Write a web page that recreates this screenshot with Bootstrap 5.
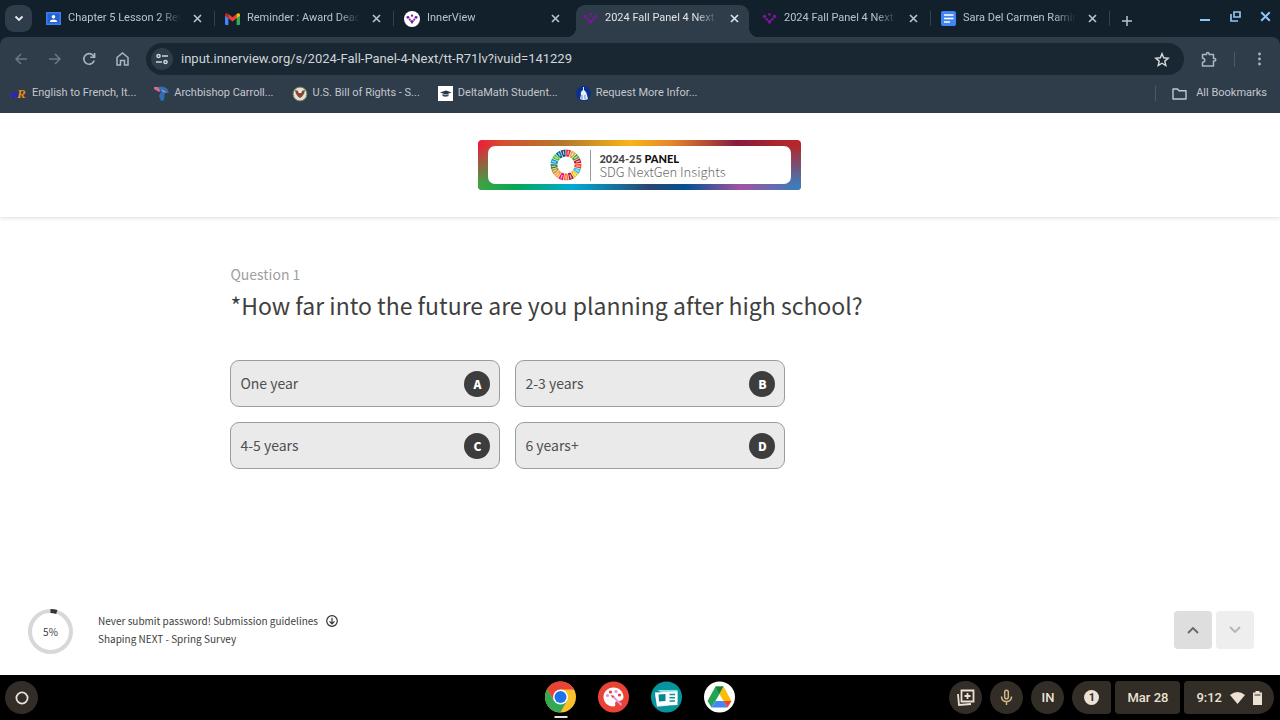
<!DOCTYPE html>
<html lang="en">
<head>
<meta charset="utf-8">
<meta name="viewport" content="width=device-width, initial-scale=1">
<title>2024 Fall Panel 4 Next</title>
<link rel="stylesheet" href="https://cdn.jsdelivr.net/npm/bootstrap@5.3.0/dist/css/bootstrap.min.css">
<style>
  :root { --strip: #12202b; --bar: #2f3c4a; --field: #192732; --chip: #322d27; --cream: #ece1d5; }
  body { font-family: Roboto, sans-serif; color: #3d3d3d; background: #fff; }
  button { color: inherit; }
  .plain-btn { background: none; border: 0; padding: 0; display: inline-flex; align-items: center; justify-content: center; }
  svg { display: block; flex: none; }

  /* Browser chrome */
  .tab-strip { background: var(--strip); height: 37px; padding: 5px 9px 0 5px; font-size: 11px; color: #b9c4ce; }
  .tab-search { width: 27px; height: 27px; border-radius: 9px; background: var(--bar); color: #e8eaed; }
  .tabs { margin-left: 4px; min-width: 0; }
  .tab-item { position: relative; flex: 0 1 179px; min-width: 0; height: 32px; padding: 0 13px 5px 10px; gap: 7px; }
  .tab-item::after { content: ""; position: absolute; right: 0; top: 6px; width: 1px; height: 15px; background: #33414d; }
  .tab-item.no-line::after { display: none; }
  .tab-title { flex: 1 1 0; min-width: 0; overflow: hidden; white-space: nowrap; color: inherit; text-decoration: none;
    -webkit-mask-image: linear-gradient(90deg, #000 calc(100% - 22px), transparent); mask-image: linear-gradient(90deg, #000 calc(100% - 22px), transparent); }
  .tab-close { width: 9px; height: 18px; margin-left: 5px; }
  .tab-active { color: #dfe3e7; }
  .tab-active::before { content: ""; position: absolute; inset: 0 3px 0 3px; background: var(--bar); border-radius: 9px 9px 0 0; }
  .tab-active::after { top: auto; bottom: 0; left: -6px; right: -6px; width: auto; height: 9px;
    background: radial-gradient(circle at 0 0, transparent 9px, var(--bar) 9px) left / 9px 9px no-repeat,
                radial-gradient(circle at 100% 0, transparent 9px, var(--bar) 9px) right / 9px 9px no-repeat; }
  .tab-active > * { position: relative; z-index: 1; }
  .win-buttons { color: #8fc4f8; gap: 19px; height: 22px; }
  .toolbar-wrap { background: var(--strip); }
  .toolbar-inner { background: var(--bar); border-radius: 8px 8px 0 0; height: 44px; padding: 0 16px 0 14px; color: #aab6c2; }
  .nav-icons { width: 132px; gap: 20px; }
  .dimmed { color: #6b7885; }
  .omnibox { background: var(--field); height: 32px; border-radius: 16px; padding: 0 14px 0 5px; gap: 8px; }
  .site-info { width: 22px; height: 22px; border-radius: 50%; background: var(--bar); color: #cfd5da; }
  .url-input { background: none; border: 0; outline: 0; padding: 0; font-size: 13px; color: #d0d5d9; }
  .vline { width: 1px; height: 15px; background: #4b5966; }
  .bookmark-bar { background: var(--bar); height: 32px; padding: 0 13px 7px 11px; font-size: 11px; color: #c3c8ce; }
  .bookmark-bar a { color: inherit; text-decoration: none; gap: 5px; white-space: nowrap; }
  .bookmark-list { gap: 18px; }

  /* Survey */
  .survey { font-family: "Noto Sans CJK SC", "Open Sans", sans-serif; }
  .survey-head { height: 104px; padding-right: 1px; box-shadow: 0 1px 4px rgba(0,0,0,.14); }
  .brand-banner { position: relative; width: 323px; height: 50px; padding: 6px 10px; border-radius: 4px; overflow: hidden;
    background: linear-gradient(90deg, #ed1c3c, #d3502f 8%, #b47b2c 27%, #f9b517 47%, #e5862d 60%, #851c3e 80%, #b3262a 95%); }
  .brand-banner::before { content: ""; position: absolute; inset: 0;
    background: linear-gradient(90deg, #3ba545, #04a855 12%, #00aad6 29%, #27466f 53%, #005293 64%, #a153a0 81%, #3d7cb9 98%);
    -webkit-mask-image: linear-gradient(transparent 10%, #000 90%); mask-image: linear-gradient(transparent 10%, #000 90%); }
  .brand-panel { position: relative; height: 38px; border-radius: 7px; background: #fff; gap: 8px; padding-right: 3px; }
  .brand-text { border-left: 1px solid #999; height: 31px; padding-left: 8px; color: #6c6c6c; font-size: 13px; line-height: 13px; font-weight: 300; }
  .brand-text strong { font: 900 11px/13px Lato, sans-serif; color: #444; }
  .brand-text b { color: #111; }
  .question-area { padding: 47px 0 0 18%; }
  .q-label { font-size: 14px; line-height: 20px; color: #a0a0a0; }
  .q-title { font-size: 23px; line-height: 36px; font-weight: 400; color: #3f3f3f; margin: 3px 0 37px; }
  .choice-grid { display: grid; grid-template-columns: repeat(2, 270px); gap: 15px; }
  .choice { height: 47px; padding: 0 9px; border: 1px solid #9c9c9c; border-radius: 9px; background: #eaeaea; color: #4f4f4f; font-size: 14px; }
  .choice-key { width: 26px; height: 26px; border-radius: 50%; background: #3d3d3d; color: #fff; font-size: 12px; font-weight: 900; }
  .survey-foot { padding: 0 26px 20px 27px; font-size: 10px; line-height: 18px; }
  .ring { position: relative; width: 47px; height: 47px; margin-right: 24px; }
  .ring span { position: absolute; inset: 0; display: flex; align-items: center; justify-content: center; }
  .survey-foot a { color: inherit; text-decoration: none; }
  .foot-main { padding-bottom: 3px; }
  .step-btn { width: 38px; height: 38px; border-radius: 4px; background: #dedede; color: #666; }
  .step-btn:disabled { background: #eee; color: #b5b5b5; }

  /* Shelf */
  .shelf { position: relative; background: #000; height: 45px; padding: 0 6px 0 5px; color: var(--cream); font-size: 13px; font-weight: 500; }
  .shelf .plain-btn { font-weight: inherit; }
  .chip { height: 33px; background: var(--chip); border-radius: 4px; padding: 0 12px; }
  .chip-round { width: 33px; border-radius: 50%; padding: 0; }
  .chip-start { border-radius: 17px 4px 4px 17px; }
  .chip-end { border-radius: 4px 17px 17px 4px; }
  .dock { position: absolute; left: 50%; top: 6px; transform: translateX(-50%); gap: 21px; }
  .dock .running::after { content: ""; position: absolute; top: 35px; width: 13px; height: 2px; background: var(--cream); }
  .count { width: 15px; height: 15px; border-radius: 50%; background: var(--cream); color: var(--chip); font-size: 11px; line-height: 15px; font-weight: 700; }
</style>
</head>
<body>
<svg width="0" height="0" class="position-absolute" aria-hidden="true">
  <defs>
    <symbol id="x" viewBox="0 0 9 9"><path d="M1 1l7 7M8 1L1 8" stroke="currentColor" stroke-width="1.6"/></symbol>
    <symbol id="iv" viewBox="0 0 16 16"><g fill="#7a159f"><circle cx="2.600" cy="5.800" r="1.900"/><circle cx="8" cy="3.500" r="1.500"/><circle cx="13.400" cy="5.800" r="1.900"/><circle cx="5" cy="8.800" r="1.400"/><circle cx="11" cy="8.800" r="1.400"/><path d="M5.200 10.500 8 9.300l2.800 1.200L8 14.500z"/></g></symbol>
  </defs>
</svg>
<div class="d-flex flex-column min-vh-100">
  <header>
    <div class="tab-strip d-flex">
      <button class="plain-btn tab-search" aria-label="Search tabs"><svg width="10" height="7" viewBox="0 0 10 7"><path d="M1.500 1.500 5 5l3.500-3.500" fill="none" stroke="currentColor" stroke-width="1.900"/></svg></button>
      <div class="tabs d-flex flex-grow-1">
        <div class="tab-item d-flex align-items-center"><svg width="15" height="13" viewBox="0 0 15 13"><path fill="#3c7df0" d="M0 0h15v13H0z"/><path fill="#2362cf" d="M1.500 1.500h12v10h-12z"/><circle cx="7.500" cy="4.800" r="1.800" fill="#fff"/><path fill="#fff" d="M3.800 10q0-2.600 3.700-2.600T11.200 10z"/></svg><a href="#" class="tab-title">Chapter 5 Lesson 2 Review</a><button class="plain-btn tab-close" aria-label="Close tab"><svg width="9" height="9"><use href="#x"/></svg></button></div>
        <div class="tab-item d-flex align-items-center"><svg width="15" height="12" viewBox="0 0 15 12"><path fill="#4285f4" d="M0 2h3.400v10H1a1 1 0 0 1-1-1z"/><path fill="#34a853" d="M11.600 2H15v9a1 1 0 0 1-1 1h-2.400z"/><path fill="#ea4335" d="M3.400 1 7.500 4.200 11.600 1v4.200L7.500 8.400 3.400 5.200z"/><path fill="#c5221f" d="M0 1.800C0 .2 1.800-.5 3.400 1v4.200L0 2.700z"/><path fill="#fbbc04" d="M15 1.800C15 .2 13.200-.5 11.600 1v4.200L15 2.700z"/></svg><a href="#" class="tab-title">Reminder : Award Deadline</a><button class="plain-btn tab-close" aria-label="Close tab"><svg width="9" height="9"><use href="#x"/></svg></button></div>
        <div class="tab-item no-line d-flex align-items-center"><svg width="16" height="16" viewBox="0 0 16 16"><circle cx="8" cy="8" r="8" fill="#fff"/><use href="#iv" x="2" y="1.500" width="12" height="13"/></svg><a href="#" class="tab-title">InnerView</a><button class="plain-btn tab-close" aria-label="Close tab"><svg width="9" height="9"><use href="#x"/></svg></button></div>
        <div class="tab-item tab-active d-flex align-items-center"><svg width="15" height="15"><use href="#iv"/></svg><a href="#" class="tab-title">2024 Fall Panel 4 Next</a><button class="plain-btn tab-close" aria-label="Close tab"><svg width="9" height="9"><use href="#x"/></svg></button></div>
        <div class="tab-item d-flex align-items-center"><svg width="15" height="15"><use href="#iv"/></svg><a href="#" class="tab-title">2024 Fall Panel 4 Next</a><button class="plain-btn tab-close" aria-label="Close tab"><svg width="9" height="9"><use href="#x"/></svg></button></div>
        <div class="tab-item d-flex align-items-center"><svg width="15" height="15" viewBox="0 0 15 15"><rect width="15" height="15" rx="2" fill="#4285f4"/><path d="M3 4h9.500M3 7.500h9.500M3 11h6" stroke="#fff" stroke-width="1.700"/></svg><a href="#" class="tab-title">Sara Del Carmen Ramirez</a><button class="plain-btn tab-close" aria-label="Close tab"><svg width="9" height="9"><use href="#x"/></svg></button></div>
        <button class="plain-btn ms-2 ps-1 mt-1 h-75 align-self-start" aria-label="New tab"><svg width="10" height="10" viewBox="0 0 10 10"><path d="M5 0v10M0 5h10" stroke="currentColor" stroke-width="1.500"/></svg></button>
      </div>
      <div class="win-buttons d-flex align-items-center">
        <button class="plain-btn" aria-label="Minimize"><svg width="11" height="11" viewBox="0 0 11 11"><path d="M0 9h10" stroke="currentColor" stroke-width="2"/></svg></button>
        <button class="plain-btn" aria-label="Restore"><svg width="11" height="11" viewBox="0 0 11 11"><path d="M4 1h6v5H4zM1 3v7h7" fill="none" stroke="currentColor" stroke-width="1.700"/></svg></button>
        <button class="plain-btn" aria-label="Close window"><svg width="11" height="11"><use href="#x"/></svg></button>
      </div>
    </div>
    <div class="toolbar-wrap">
      <div class="toolbar-inner d-flex align-items-center">
        <div class="nav-icons d-flex align-items-center flex-shrink-0">
          <button class="plain-btn dimmed" aria-label="Back"><svg width="14" height="14" viewBox="0 0 14 14"><path d="M13 7H2M7 2 2 7l5 5" fill="none" stroke="currentColor" stroke-width="1.500"/></svg></button>
          <button class="plain-btn dimmed" aria-label="Forward"><svg width="14" height="14" viewBox="0 0 14 14"><path d="M1 7h11M7 2l5 5-5 5" fill="none" stroke="currentColor" stroke-width="1.500"/></svg></button>
          <button class="plain-btn" aria-label="Reload"><svg width="14" height="14" viewBox="0 0 14 14"><path d="M12.200 8.500A5.300 5.300 0 1 1 11 3.300l1.300 1.500M12.600.900V5.200H8.300" fill="none" stroke="currentColor" stroke-width="1.600"/></svg></button>
          <button class="plain-btn" aria-label="Home"><svg width="13" height="14" viewBox="0 0 13 14"><path d="M1 13V5.500L6.500 1 12 5.500V13H8.500V8.500h-4V13z" fill="none" stroke="currentColor" stroke-width="1.500"/></svg></button>
        </div>
        <div class="omnibox d-flex align-items-center flex-grow-1">
          <button class="plain-btn site-info" aria-label="Site information"><svg width="12" height="12" viewBox="0 0 12 12"><g fill="none" stroke="currentColor" stroke-width="1.500"><circle cx="2.500" cy="3" r="1.600"/><path d="M6 3h6M0 9h6"/><circle cx="9.500" cy="9" r="1.600"/></g></svg></button>
          <input class="url-input flex-grow-1" type="text" aria-label="Address" value="input.innerview.org/s/2024-Fall-Panel-4-Next/tt-R71lv?ivuid=141229">
          <button class="plain-btn" aria-label="Bookmark"><svg width="16" height="15" viewBox="0 0 16 15"><path d="m8 1.700 1.700 4.100 4.500.4-3.400 2.900 1 4.400L8 11.200l-3.800 2.300 1-4.400L1.800 6.200l4.500-.4z" fill="none" stroke="#d5dade" stroke-width="1.400"/></svg></button>
        </div>
        <button class="plain-btn ms-3" aria-label="Extensions"><svg width="18" height="17" viewBox="0 0 18 17"><path d="M2.500 3.500h4V2.700a1.300 1.300 0 0 1 2.600 0v.8H13.500v4h1a1.300 1.300 0 0 1 0 2.600h-1v5h-11v-3.800c3 0 3-4 0-4z" fill="none" stroke="currentColor" stroke-width="1.500" stroke-linejoin="round"/></svg></button>
        <span class="vline mx-3"></span>
        <button class="plain-btn ps-1" aria-label="Menu"><svg width="9" height="14" viewBox="0 0 9 14" fill="currentColor"><circle cx="4.500" cy="2" r="1.400"/><circle cx="4.500" cy="7" r="1.400"/><circle cx="4.500" cy="12" r="1.400"/></svg></button>
      </div>
    </div>
    <nav class="bookmark-bar d-flex align-items-center" aria-label="Bookmarks">
      <div class="bookmark-list d-flex flex-grow-1">
        <a href="#" class="d-flex align-items-center"><svg width="16" height="15" viewBox="0 0 16 15"><text x="0" y="12" font-family="Liberation Sans" font-size="10" font-weight="700" fill="#2222dd">w</text><text x="6" y="12" font-family="Liberation Serif" font-size="13" font-style="italic" font-weight="700" fill="#e58a17">R</text></svg>English to French, It...</a>
        <a href="#" class="d-flex align-items-center"><svg width="15" height="15" viewBox="0 0 15 15"><path d="M0 1h5l3 2-3 3-5-3z" fill="#e46883"/><path d="M4 1q9-2 11 6l-4-1-1 8-3 1-2-5 2-4z" fill="#2a6fb7"/><path d="m7 3 7 4-5-1z" fill="#ef7d93"/></svg>Archbishop Carroll...</a>
        <a href="#" class="d-flex align-items-center"><svg width="16" height="16" viewBox="0 0 16 16"><circle cx="8" cy="8" r="7" fill="#e5dfd0" stroke="#6e6c62"/><path d="M3 4q3 0 5 3 2-3 5-3-1 6-5 8Q4 10 3 4z" fill="#6d5133"/><path d="M6.500 4.500h3V7h-3z" fill="#f3efe4"/><path d="M6.500 7h3v3L8 11.500 6.500 10z" fill="#b72f3a"/></svg>U.S. Bill of Rights - S...</a>
        <a href="#" class="d-flex align-items-center"><svg width="15" height="15" viewBox="0 0 15 15"><path fill="#fff" d="M0 0h15v15H0z"/><path d="m2 6.500 6-2 5.500 2-5.500 2z" fill="#263642"/><path d="M4.500 8v2q3 1.500 6 0V8L8 9z" fill="#3e4d58"/></svg>DeltaMath Student...</a>
        <a href="#" class="d-flex align-items-center"><svg width="15" height="15" viewBox="0 0 15 15"><circle cx="7.500" cy="7.500" r="7.500" fill="#0b318f"/><path d="M7 1h1v3q3 2 3 5l1 4q-4 2-8 0l1-4q-1-3 2-5z" fill="#e8eef8"/><path d="M6 9v4M9 9v4" stroke="#6d86bd"/></svg>Request More Infor...</a>
      </div>
      <span class="vline me-3"></span>
      <a href="#" class="d-flex align-items-center"><svg class="me-1" width="15" height="12" viewBox="0 0 15 12"><path d="M1 1h4.500L7 2.700h7V11H1z" fill="none" stroke="currentColor" stroke-width="1.400" stroke-linejoin="round"/></svg>All Bookmarks</a>
    </nav>
  </header>

  <main class="survey flex-grow-1 d-flex flex-column">
    <div class="survey-head d-flex align-items-center justify-content-center">
      <div class="brand-banner">
        <div class="brand-panel d-flex align-items-center justify-content-center">
          <svg id="wheel" width="32" height="32" viewBox="-16 -16 32 32" role="img" aria-label="Goals wheel"></svg>
          <div class="brand-text d-flex flex-column justify-content-center"><strong>2024-25 <b>PANEL</b></strong><span>SDG NextGen Insights</span></div>
        </div>
      </div>
    </div>
    <section class="question-area flex-grow-1">
      <div class="q-label">Question 1</div>
      <h1 class="q-title">*How far into the future are you planning after high school?</h1>
      <div class="choice-grid">
        <button class="choice d-flex align-items-center justify-content-between">One year<span class="choice-key d-flex align-items-center justify-content-center">A</span></button>
        <button class="choice d-flex align-items-center justify-content-between">2-3 years<span class="choice-key d-flex align-items-center justify-content-center">B</span></button>
        <button class="choice d-flex align-items-center justify-content-between">4-5 years<span class="choice-key d-flex align-items-center justify-content-center">C</span></button>
        <button class="choice d-flex align-items-center justify-content-between">6 years+<span class="choice-key d-flex align-items-center justify-content-center">D</span></button>
      </div>
    </section>
    <footer class="survey-foot d-flex align-items-center">
      <div class="ring"><svg width="47" height="47" viewBox="0 0 47 47"><circle cx="23.500" cy="23.500" r="20.500" fill="none" stroke="#d8d8d8" stroke-width="4"/><path d="M23.500 3a20.500 20.500 0 0 1 6.300 1" fill="none" stroke="#333" stroke-width="4"/></svg><span>5%</span></div>
      <div class="foot-main flex-grow-1 d-flex align-items-center justify-content-between">
        <div>
          <div class="d-flex align-items-center gap-2"><span>Never submit password! <a href="#">Submission guidelines</a></span><svg width="12" height="12" viewBox="0 0 12 12"><g fill="none" stroke="#333" stroke-width="1.200"><circle cx="6" cy="6" r="5.300"/><path d="M6 2.800v6M3.500 6.300 6 8.800l2.500-2.500"/></g></svg></div>
          <div>Shaping NEXT - Spring Survey</div>
        </div>
        <div class="d-flex">
          <button class="plain-btn step-btn me-1" aria-label="Previous"><svg width="12" height="8" viewBox="0 0 12 8"><path d="m1 7 5-5 5 5" fill="none" stroke="currentColor" stroke-width="1.800"/></svg></button>
          <button class="plain-btn step-btn" aria-label="Next" disabled><svg width="12" height="8" viewBox="0 0 12 8"><path d="m1 1 5 5 5-5" fill="none" stroke="currentColor" stroke-width="1.800"/></svg></button>
        </div>
      </div>
    </footer>
  </main>

  <footer class="shelf d-flex align-items-center justify-content-between">
    <button class="plain-btn chip chip-round" aria-label="Launcher"><svg width="14" height="14" viewBox="0 0 14 14"><circle cx="7" cy="7" r="5.600" fill="none" stroke="currentColor" stroke-width="1.800"/></svg></button>
    <div class="dock d-flex">
      <button class="plain-btn running" aria-label="Chrome"><svg width="32" height="32" viewBox="-16 -16 32 32"><circle r="15.500" fill="#fbc02d"/><path d="M0-7.500H13.500A15.500 15.500 0 0 0-13.400-7.750L-6.500 3.750z" fill="#ea4335"/><path d="M-13.400-7.750A15.500 15.500 0 0 0-.2 15.500L6.500 3.750-6.500 3.750z" fill="#34a853"/><circle r="7.500" fill="#fff"/><circle r="6" fill="#1a73e8"/></svg></button>
      <button class="plain-btn" aria-label="Canvas"><svg width="32" height="32" viewBox="-16 -16 32 32"><circle r="15.500" fill="#ea4335"/><path d="M0-9.500C-6-9.500-10-5-10 0S-6 9.500 0 9.500c3 0 1-3 2-4.500s8 0 8-5S6-9.500 0-9.500z" fill="#fff"/><g fill="#ea4335"><circle cx="-3" cy="-5" r="1.600"/><circle cx="6" cy="-2" r="1.600"/></g><g fill="#dc8ee0"><circle cx="-6" cy="-1.500" r="1.600"/><circle cx="2.500" cy="-5.500" r="1.600"/></g><path d="m-1-1 9 9" stroke="#d9a0e6" stroke-width="2"/><path d="m-3-2 4 1-2 2z" fill="#ea4335"/></svg></button>
      <button class="plain-btn" aria-label="News"><svg width="32" height="32" viewBox="-16 -16 32 32"><circle r="15.500" fill="#07949d"/><path d="m-11.500-3 2 13 12-1.500z" fill="#aecbfa"/><path d="M-9-7H11V5z" fill="#8fe3e0"/><path d="m-11.500-4.500 22.500-1V8l-20.500 1z" fill="#fff"/><path d="m-8-2.500 7-.5V4l-6.500.500z" fill="#07868f"/><path d="M3-2.500h5.500M3 .8h5.500M3 4h5.500" stroke="#07949d" stroke-width="1.600"/></svg></button>
      <button class="plain-btn" aria-label="Drive"><svg width="32" height="32" viewBox="-16 -16 32 32"><circle r="15.500" fill="#fff"/><path d="M-4-10.500-12 4l4 6.500L0-3l4-7.500z" fill="#23a455"/><path d="M-4-10.500H4L0-3z" fill="#188038"/><path d="M4-10.500 12 4H4L0-3z" fill="#fbbc04"/><path d="M-8 10.500-4 4h8l4 6.500z" fill="#4285f4"/><path d="M4 4h8l-4 6.500z" fill="#ea4335"/></svg></button>
    </div>
    <div class="d-flex align-items-center">
      <button class="plain-btn chip chip-round me-2" aria-label="Screen capture"><svg width="19" height="18" viewBox="0 0 19 18"><path d="M5.500 1.500h12v11h-12zM2 5l1 11 12-1M11.500 4v6M8.500 7h6" fill="none" stroke="currentColor" stroke-width="1.800"/></svg></button>
      <button class="plain-btn chip chip-round me-2" aria-label="Dictation"><svg width="13" height="17" viewBox="0 0 13 17"><g fill="none" stroke="#d1b78c" stroke-width="1.500"><rect x="4.700" y="1.200" width="3.600" height="8.500" rx="1.800"/><path d="M1.500 7.500q0 5 5 5t5-5M6.500 12.500V16"/></g></svg></button>
      <button class="plain-btn chip chip-round me-2">IN</button>
      <button class="plain-btn chip chip-start me-1" aria-label="Notifications"><span class="count">1</span></button>
      <button class="plain-btn chip me-1">Mar 28</button>
      <button class="plain-btn chip chip-end gap-2">9:12<svg width="15" height="12" viewBox="0 0 15 12"><path d="M0 3q7.500-6 15 0L7.500 12z" fill="currentColor"/></svg><svg width="9" height="14" viewBox="0 0 9 14"><path d="M2.500 0h4v1.500H9V14H0V1.500h2.500z" fill="currentColor"/><path d="M1.500 4h6" stroke="#322d27"/></svg></button>
    </div>
  </footer>
</div>
<script src="https://cdn.jsdelivr.net/npm/bootstrap@5.3.0/dist/js/bootstrap.bundle.min.js"></script>
<script>
  const goals = ["#e5243b","#dda63a","#4c9f38","#c5192d","#ff3a21","#26bde2","#fcc30b","#a21942","#fd6925","#dd1367","#fd9d24","#bf8b2e","#3f7e44","#0a97d9","#56c02b","#00689d","#19486a"];
  document.getElementById("wheel").innerHTML = goals.map((c, i) =>
    `<g transform="rotate(${(i * 360 / 17 + 10).toFixed(1)})"><path d="M-2.500-15.300 2.500-15.300 1.300-8.500-1.300-8.500z" fill="${c}"/><path d="M0-14.500v4" stroke="#fff" stroke-width="1.200" opacity=".7"/></g>`).join("");
</script>
</body>
</html>
